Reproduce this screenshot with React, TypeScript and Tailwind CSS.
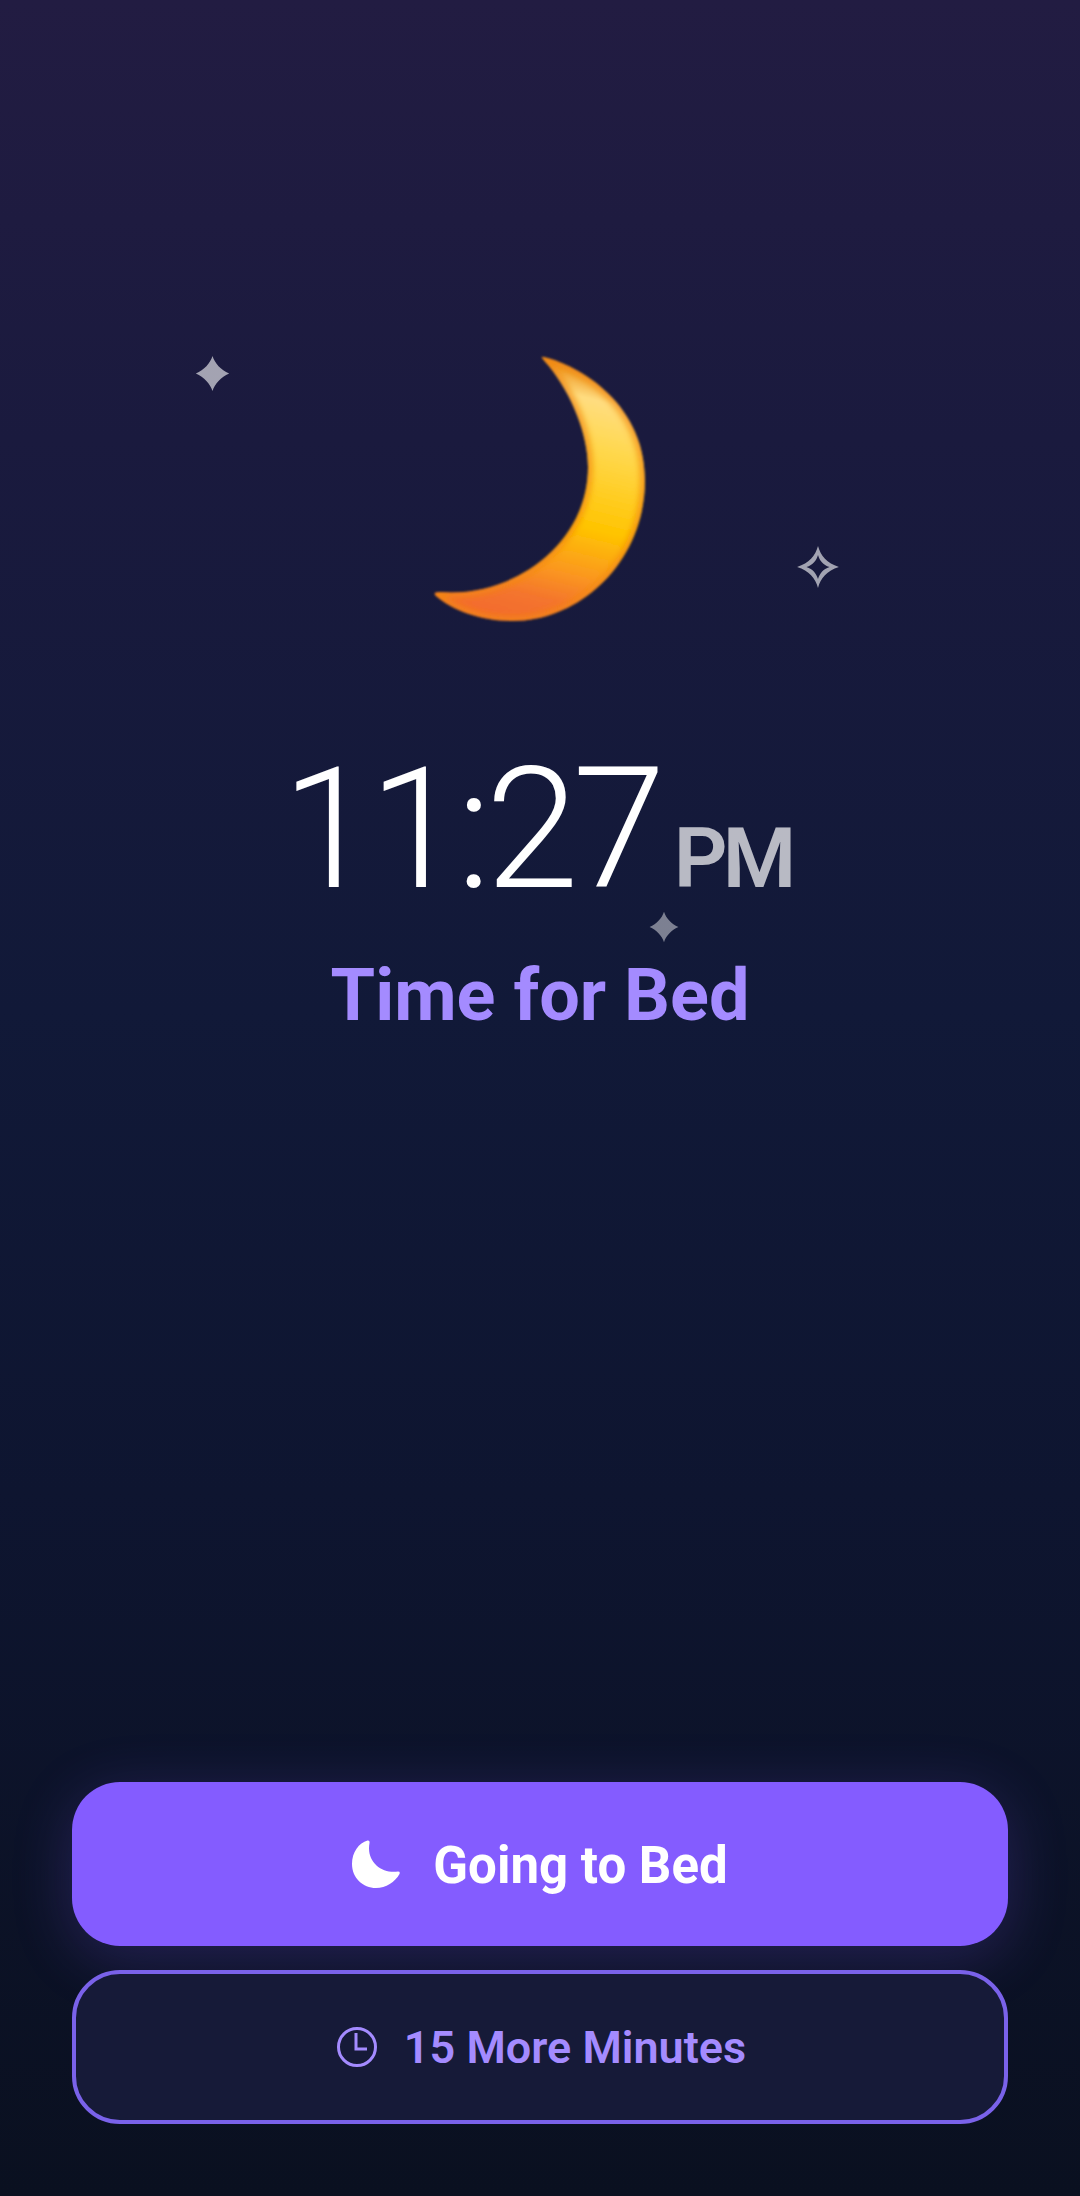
import React from "react";

function Star({ className, outline }: { className: string; outline?: boolean }) {
  return (
    <svg viewBox="0 0 40 40" className={className} aria-hidden="true">
      {outline ? (
        <path
          d="M20 1 C22.5 10 28 16.5 39 20 C28 23.5 22.5 30 20 39 C17.5 30 12 23.5 1 20 C12 16.5 17.5 10 20 1 Z M20 9 C18.5 14 15.5 18 9.5 20 C15.5 22 18.5 26 20 31 C21.5 26 24.5 22 30.5 20 C24.5 18 21.5 14 20 9 Z"
          fill="currentColor"
          fillRule="evenodd"
        />
      ) : (
        <path d="M20 1 C22.5 9 29 16 38 20 C29 24 22.5 31 20 39 C17.5 31 11 24 2 20 C11 16 17.5 9 20 1 Z" fill="currentColor" />
      )}
    </svg>
  );
}

const MOON =
  "M143 17 C170 22 245 58 245 140 C245 222 180 281 113 281 C80 281 52 270 36 256 Q32 252 40 252 C112 258 188 205 188 127 C188 95 172 54 148 25 Q139 15 143 17 Z";

function BigMoon() {
  return (
    <svg viewBox="0 0 280 290" className="h-[290px] w-[280px]" aria-hidden="true">
      <defs>
        <linearGradient id="moonFill" x1="0.62" y1="0" x2="0.42" y2="1">
          <stop offset="0" stopColor="#e0781a" />
          <stop offset="0.05" stopColor="#f0a030" />
          <stop offset="0.13" stopColor="#ffdd80" />
          <stop offset="0.3" stopColor="#ffd84e" />
          <stop offset="0.6" stopColor="#ffc400" />
          <stop offset="0.78" stopColor="#fb981f" />
          <stop offset="0.9" stopColor="#f4752d" />
          <stop offset="1" stopColor="#f36b2e" />
        </linearGradient>
        <filter id="moonSoft" x="-5%" y="-5%" width="110%" height="110%">
          <feGaussianBlur stdDeviation="1" />
        </filter>
        <filter id="moonEdge" x="-10%" y="-10%" width="120%" height="120%">
          <feGaussianBlur stdDeviation="3" />
        </filter>
        <clipPath id="moonClip">
          <path d={MOON} />
        </clipPath>
      </defs>
      <g filter="url(#moonSoft)">
        <path d={MOON} fill="url(#moonFill)" />
        <g clipPath="url(#moonClip)">
          <path d={MOON} fill="none" stroke="#f28a10" strokeWidth="9" strokeOpacity="0.8" filter="url(#moonEdge)" />
        </g>
      </g>
    </svg>
  );
}

export default function App() {
  return (
    <div className="relative flex h-[2196px] w-[1080px] flex-col items-center overflow-hidden bg-[linear-gradient(180deg,#221c42_0%,#1a1a3e_20%,#111938_46%,#0e1530_68%,#0a1020_100%)] font-['Roboto',sans-serif]">
      <Star className="absolute left-[194px] top-[355px] h-[37px] w-[37px] text-white/60" />
      <Star outline className="absolute left-[796px] top-[545px] h-[44px] w-[44px] text-white/60" />
      <Star className="absolute left-[648px] top-[911px] h-[32px] w-[32px] text-white/45" />

      <div className="mt-[340px]">
        <BigMoon />
      </div>

      <div className="mt-[100px] flex items-baseline pr-[7px] leading-none text-white">
        <span className="text-[168px] font-light leading-[200px] tracking-[-6px]">11:27</span>
        <span className="ml-[14px] text-[84px] font-semibold tracking-[-5px] text-white/70">PM</span>
      </div>

      <div className="mt-[24px] text-[72px] font-bold leading-[84px] text-[#a48bff]">Time for Bed</div>

      <div className="mb-[72px] mt-auto flex w-[936px] flex-col gap-[24px]">
        <button className="flex h-[164px] items-center justify-center gap-[33px] rounded-[48px] bg-[#845cff] text-[51px] font-bold text-white shadow-[0_12px_60px_rgba(132,92,255,0.22)]">
          <svg viewBox="0 0 48 48" className="h-[48px] w-[48px]" aria-hidden="true">
            <path
              d="M15.5 0.5 C7 3 0 12 0 24 C0 38 11 48 24 48 C34 48 43 42 47.5 34 Q48.5 31.5 46 31.5 C30 34 14 22 17.5 3 Q18 0 15.5 0.5 Z"
              fill="currentColor"
            />
          </svg>
          <span className="relative top-[2px]">Going to Bed</span>
        </button>
        <button className="flex h-[154px] items-center justify-center gap-[27px] rounded-[48px] border-[4px] border-[#7a62ea] bg-[#161a38] pl-[3px] text-[45px] font-semibold text-[#a48bff]">
          <svg viewBox="0 0 40 40" className="h-[40px] w-[40px]" fill="none" stroke="currentColor" strokeWidth="3" aria-hidden="true">
            <circle cx="20" cy="20" r="18.5" />
            <path d="M19 6 V22 H30" />
          </svg>
          <span className="relative top-[1px]">15 More Minutes</span>
        </button>
      </div>
    </div>
  );
}
